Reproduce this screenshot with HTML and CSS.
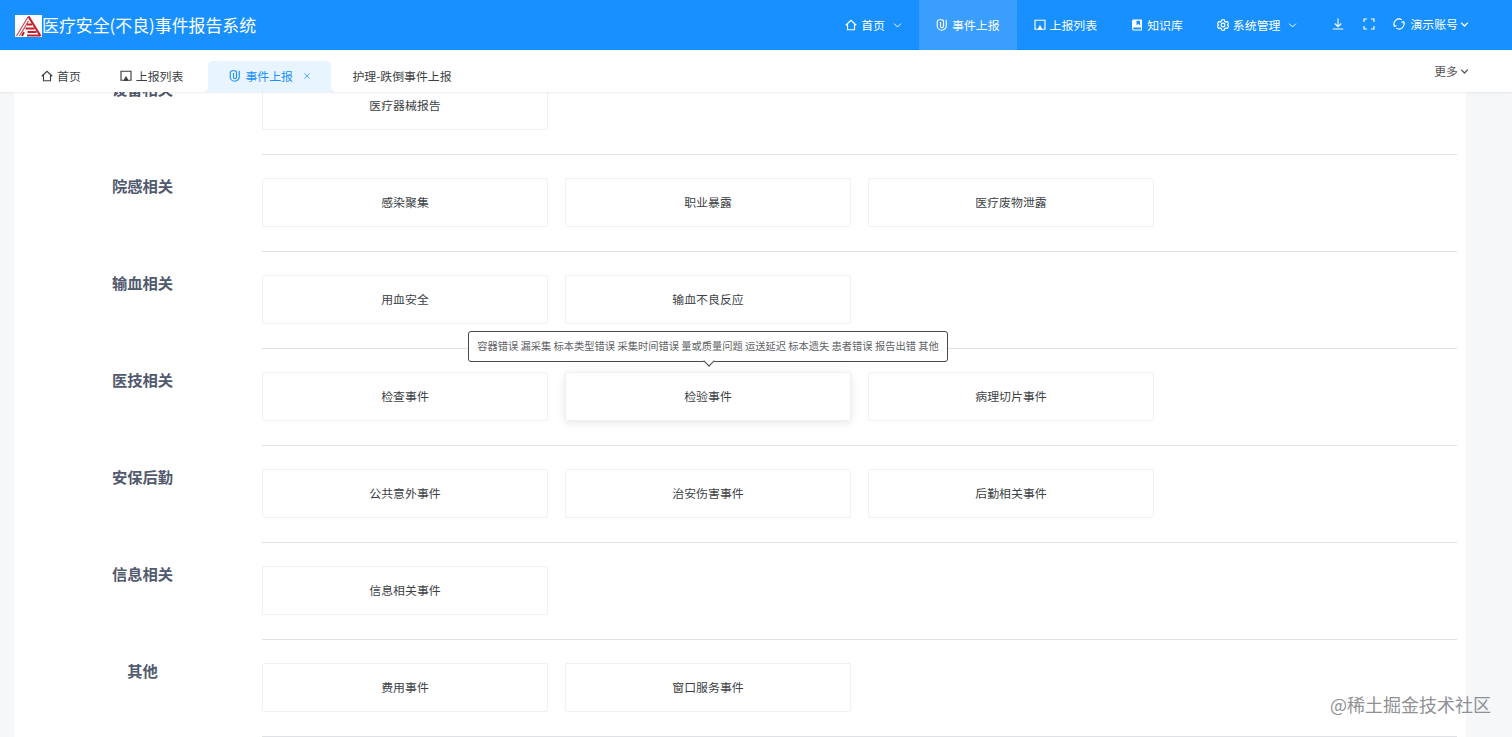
FILE: index.html
```html
<!DOCTYPE html>
<html lang="zh-CN">
<head>
<meta charset="utf-8">
<title>医疗安全(不良)事件报告系统</title>
<link rel="stylesheet" href="styles.css">
</head>
<body>
<svg class="sprite" aria-hidden="true">
  <symbol id="home" viewBox="0 0 24 24"><path d="M1.500 12.500 12 2.500l10.500 10M5 10v11.500h14V10"/></symbol>
  <symbol id="clip" viewBox="0 0 24 24"><path d="M9 6v8.500a3 3 0 0 0 6 0V5a3.500 3.500 0 0 0-3.500-3.500H7A4.500 4.500 0 0 0 2.500 6v7.500a9 9 0 0 0 18 0V1.500"/></symbol>
  <symbol id="cast" viewBox="0 0 24 24"><path d="M7 20.500H2v-18h20v18h-5"/><path class="solid" d="m12 12 6 10H6z"/></symbol>
  <symbol id="book" viewBox="0 0 24 24"><path class="solid" fill-rule="evenodd" d="M5 1h16q1 0 1 1v20q0 1-1 1H5q-3-.5-3-4V4q0-3 3-3zm6 2.500v9l3.500-2.500 3.500 2.500v-9zM6 17q-2 0-2 2t2 2h14v-4z"/></symbol>
  <symbol id="gear" viewBox="0 0 24 24"><path d="m9.500 1.500-.8 3.200-2.400 1.400-3.200-.9L.9 9.500 3.200 12 .9 14.500l2.200 4.300 3.200-.9 2.400 1.400.8 3.200h5l.8-3.200 2.400-1.400 3.200.9 2.200-4.300L20.800 12l2.300-2.500-2.200-4.300-3.200.9-2.400-1.400-.8-3.200z"/><circle cx="12" cy="12" r="3.800"/></symbol>
  <symbol id="down" viewBox="0 0 24 24"><path d="M12 1v16M5.500 11l6.500 6.500 6.500-6.500M1.500 22h21"/></symbol>
  <symbol id="full" viewBox="0 0 24 24"><path d="M2 8V2h6m8 0h6v6m0 8v6h-6m-8 0H2v-6"/></symbol>
  <symbol id="sync" viewBox="0 0 24 24"><path d="M3 16a9.800 9.800 0 0 1 14.500-12.200M21 8A9.800 9.800 0 0 1 6.500 20.200M1 13l2 4 4-2M23 11l-2-4-4 2"/></symbol>
  <symbol id="chev" viewBox="0 0 12 12"><path d="m1.500 3.500 4.500 4.500 4.500-4.500"/></symbol>
  <symbol id="close" viewBox="0 0 12 12"><path d="m2 2 8 8m0-8-8 8"/></symbol>
</svg>

<header class="header">
  <div class="brand">
    <svg class="logo" viewBox="0 0 27 22"><path class="logo-line" d="M1.500 21 13 2M4.500 21l9-15M13 2h1.500"/><path class="logo-edge" d="M13.500 1.500 25.500 21"/><path class="logo-bar" d="M12 9.500h5M10.500 13.500h9M9 17l-2 4M12.500 17h9M12 20.500h13"/></svg>
    <span class="brand-name">医疗安全(不良)事件报告系统</span>
  </div>
  <nav class="nav">
    <a class="nav-item"><svg class="icon"><use href="#home"/></svg><span>首页</span><svg class="chev spaced"><use href="#chev"/></svg></a>
    <a class="nav-item active"><svg class="icon"><use href="#clip"/></svg><span>事件上报</span></a>
    <a class="nav-item"><svg class="icon"><use href="#cast"/></svg><span>上报列表</span></a>
    <a class="nav-item"><svg class="icon"><use href="#book"/></svg><span>知识库</span></a>
    <a class="nav-item"><svg class="icon"><use href="#gear"/></svg><span>系统管理</span><svg class="chev spaced"><use href="#chev"/></svg></a>
  </nav>
  <div class="tools">
    <svg class="icon"><use href="#down"/></svg>
    <svg class="icon"><use href="#full"/></svg>
    <div class="account"><svg class="icon"><use href="#sync"/></svg><span>演示账号</span><svg class="chev bold"><use href="#chev"/></svg></div>
  </div>
</header>

<div class="tabs">
  <a class="tab"><svg class="icon"><use href="#home"/></svg><span>首页</span></a>
  <a class="tab"><svg class="icon"><use href="#cast"/></svg><span>上报列表</span></a>
  <a class="tab current"><svg class="icon"><use href="#clip"/></svg><span>事件上报</span><svg class="close"><use href="#close"/></svg></a>
  <a class="tab"><span>护理-跌倒事件上报</span></a>
  <div class="more"><span>更多</span><svg class="chev bold"><use href="#chev"/></svg></div>
</div>

<main class="viewport">
  <div class="panel">
    <section class="group"><h2 class="group-name">设备相关</h2><div class="cards"><div class="card">医疗器械报告</div></div></section>
    <section class="group"><h2 class="group-name">院感相关</h2><div class="cards"><div class="card">感染聚集</div><div class="card">职业暴露</div><div class="card">医疗废物泄露</div></div></section>
    <section class="group"><h2 class="group-name">输血相关</h2><div class="cards"><div class="card">用血安全</div><div class="card">输血不良反应</div></div></section>
    <section class="group"><h2 class="group-name">医技相关</h2><div class="cards"><div class="card">检查事件</div><div class="card hovered">检验事件<div class="tooltip">容器错误 漏采集 标本类型错误 采集时间错误 量或质量问题 运送延迟 标本遗失 患者错误 报告出错 其他</div></div><div class="card">病理切片事件</div></div></section>
    <section class="group"><h2 class="group-name">安保后勤</h2><div class="cards"><div class="card">公共意外事件</div><div class="card">治安伤害事件</div><div class="card">后勤相关事件</div></div></section>
    <section class="group"><h2 class="group-name">信息相关</h2><div class="cards"><div class="card">信息相关事件</div></div></section>
    <section class="group"><h2 class="group-name">其他</h2><div class="cards"><div class="card">费用事件</div><div class="card">窗口服务事件</div></div></section>
    <section class="group"><div></div><div class="cards"></div></section>
  </div>
</main>
<div class="watermark">@稀土掘金技术社区</div>
</body>
</html>
```
FILE: styles.css
```css
* { box-sizing: border-box; }

body {
  margin: 0;
  height: 737px;
  overflow: hidden;
  display: flex;
  flex-direction: column;
  background: #f5f7f9;
  font: 11.9px/18px "Noto Sans CJK SC", sans-serif;
  color: #3c3f45;
}

.sprite { position: absolute; width: 0; height: 0; }

svg { flex: none; fill: none; stroke: currentColor; stroke-width: 2.3; }
.icon { width: 12px; height: 12px; }
.chev { width: 9px; height: 9px; stroke-width: 1.3; }
.chev.spaced { margin-left: 4px; }
.chev.bold { stroke-width: 1.7; }
.solid { fill: currentColor; stroke: none; }

.header {
  flex: none;
  display: flex;
  height: 50px;
  padding: 0 43px 0 15px;
  background: #1890ff;
  color: #fff;
}
.brand { display: flex; align-items: center; margin-right: auto; padding-top: 1px; }
.logo { width: 27px; height: 22px; background: #fff; }
.logo-line { stroke: #d0484f; stroke-width: 1.2; }
.logo-edge { stroke: #c5202b; stroke-width: 2.2; }
.logo-bar { stroke: #c5202b; stroke-width: 1.9; }
.brand-name { font-size: 16.9px; line-height: 24px; margin-top: -2px; white-space: nowrap; }

.nav { display: flex; }
.nav-item { display: flex; align-items: center; gap: 4px; padding: 0 17px; white-space: nowrap; }
.nav-item.active { background: #3a9eff; }

.tools { display: flex; align-items: center; gap: 18.500px; padding: 0 0 2px 18px; }
.account { display: flex; align-items: center; }
.account .icon { margin-right: 5px; }
.account .chev { margin-left: 2px; }

.tabs {
  flex: none;
  position: relative;
  z-index: 2;
  display: flex;
  height: 42px;
  padding: 11px 43px 0 19px;
  background: #fff;
  box-shadow: 0 1px 2px rgba(0, 21, 41, 0.08);
}
.tab { display: flex; align-items: center; gap: 4px; padding: 0 17px 1px 22px; white-space: nowrap; }
.tab.current {
  position: relative;
  margin-left: 8px;
  width: 123px;
  padding-left: 21px;
  background: #e8f4ff;
  color: #1890ff;
  border-radius: 5px 5px 0 0;
}
.tab.current + .tab { padding-left: 21px; }
.tab.current::before,
.tab.current::after {
  content: "";
  position: absolute;
  bottom: 0;
  width: 5px;
  height: 5px;
}
.tab.current::before { left: -5px; background: radial-gradient(circle at 0 0, transparent 4.5px, #e8f4ff 5px); }
.tab.current::after { right: -5px; background: radial-gradient(circle at 100% 0, transparent 4.5px, #e8f4ff 5px); }
.close { width: 8px; height: 8px; margin-left: 6px; stroke-width: 1.1; }
.more { display: flex; align-items: center; gap: 2px; height: 20px; margin-left: auto; color: #555; }

.viewport { flex: 1; min-height: 0; overflow: hidden; }
.panel { width: 1452px; margin: -35px 0 0 14px; background: #fff; }

.group { display: grid; grid-template-columns: 248px 1195px; height: 97px; }
.group-name {
  margin: 22px 0 0 9px;
  text-align: center;
  font-size: 15.3px;
  line-height: 18px;
  font-weight: 700;
  color: #515a6e;
}
.cards {
  display: grid;
  grid-template-columns: repeat(3, 286px);
  grid-auto-rows: 49px;
  column-gap: 17px;
  padding-top: 23px;
  border-top: 1px solid #e0e1e4;
}
.card {
  position: relative;
  display: flex;
  align-items: center;
  justify-content: center;
  padding-bottom: 1px;
  border: 1px solid #f0f1f3;
  border-radius: 2px;
}
.card.hovered { box-shadow: 0 2px 9px rgba(0, 0, 0, 0.1); }

.tooltip {
  position: absolute;
  bottom: 58px;
  left: 50%;
  width: 480px;
  height: 31px;
  margin-left: -240px;
  border: 1px solid #46484c;
  border-radius: 3px;
  background: #fff;
  color: #606266;
  font-size: 10.25px;
  line-height: 28px;
  text-align: center;
  white-space: nowrap;
}
.tooltip::after {
  content: "";
  position: absolute;
  left: 50%;
  bottom: -4px;
  width: 7px;
  height: 7px;
  margin-left: -3px;
  transform: rotate(45deg);
  border: solid #46484c;
  border-width: 0 1px 1px 0;
  background: #fff;
}

.watermark {
  position: absolute;
  right: 21px;
  bottom: 20px;
  z-index: 3;
  font-size: 18px;
  line-height: 26px;
  color: #8f9194;
}
```
